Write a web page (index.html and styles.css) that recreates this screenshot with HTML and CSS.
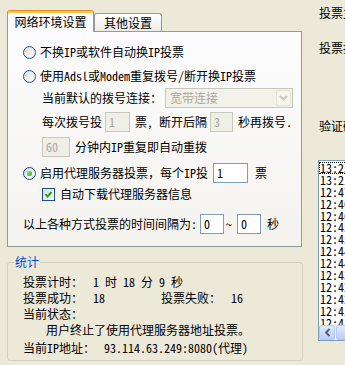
FILE: index.html
```html
<!DOCTYPE html>
<html lang="zh-CN">
<head>
    <meta charset="UTF-8">
    <title>投票设置</title>
    <link rel="stylesheet" href="styles.css">
</head>
<body>
    <div class="window">
        <div class="left">
            <div class="tabs">
                <div class="tab active">网络环境设置</div>
                <div class="tab">其他设置</div>
            </div>
            <div class="panel">
                <div class="row radio-row r1"><span class="radio"></span><span>不换IP或软件自动换IP投票</span></div>
                <div class="row radio-row r2"><span class="radio"></span><span>使用Adsl或Modem重复拨号/断开换IP投票</span></div>
                <div class="row indent r3">
                    <span>当前默认的拨号连接：</span>
                    <div class="combo off ml3">
                        <span class="combo-text">宽带连接</span>
                        <span class="combo-btn"><svg width="9" height="6" viewBox="0 0 9 6"><polyline points="1,1 4.5,4.5 8,1" fill="none" stroke="#C9C7BA" stroke-width="2"/></svg></span>
                    </div>
                </div>
                <div class="row indent r4">
                    <span>每次拨号投</span>
                    <span class="edit off w25 ml3">1</span>
                    <span class="ml5">票, 断开后隔</span>
                    <span class="edit off w23 ml3">3</span>
                    <span class="ml5">秒再拨号.</span>
                </div>
                <div class="row indent r5">
                    <span class="edit off w28">60</span>
                    <span class="ml5">分钟内IP重复即自动重拨</span>
                </div>
                <div class="row radio-row r6">
                    <span class="radio on"></span><span>启用代理服务器投票，每个IP投</span>
                    <span class="edit w35 ml5">1</span>
                    <span class="ml7">票</span>
                </div>
                <div class="row indent r7">
                    <span class="check"><svg width="11" height="11" viewBox="0 0 11 11"><polyline points="2.5,5 4.5,7.5 8.5,3" fill="none" stroke="#21A121" stroke-width="2"/></svg></span>
                    <span>自动下载代理服务器信息</span>
                </div>
                <div class="row radio-row r8">
                    <span>以上各种方式投票的时间间隔为:</span>
                    <span class="edit w24 ml3">0</span>
                    <span class="ml2">~</span>
                    <span class="edit w24 ml5">0</span>
                    <span class="ml6">秒</span>
                </div>
            </div>
            <fieldset class="group">
                <legend>统计</legend>
                <div class="stats">
                    <div class="srow"><span class="k">投票计时：</span><span>1 时 18 分 9 秒</span></div>
                    <div class="srow"><span class="k">投票成功：</span><span class="v">18</span><span class="k">投票失败：</span><span>16</span></div>
                    <div class="srow"><span>当前状态：</span></div>
                    <div class="srow sub"><span>用户终止了使用代理服务器地址投票。</span></div>
                    <div class="srow last"><span class="k wide">当前IP地址：</span><span>93.114.63.249:8080(代理)</span></div>
                </div>
            </fieldset>
        </div>
        <div class="right">
            <div class="rlabel l1">投票主题：</div>
            <div class="rlabel l2">投票按钮：</div>
            <div class="rlabel l3">验证码：</div>
            <div class="list">
                <div class="items">
                    <div class="item focus">13:25:41 投票成功</div>
                    <div class="item">13:21:08 投票成功</div>
                    <div class="item">12:47:33 投票成功</div>
                    <div class="item">12:46:59 投票成功</div>
                    <div class="item">12:46:21 投票失败</div>
                    <div class="item">12:45:50 投票成功</div>
                    <div class="item">12:45:12 投票成功</div>
                    <div class="item">12:44:40 投票失败</div>
                    <div class="item">12:44:02 投票成功</div>
                    <div class="item">12:43:31 投票成功</div>
                    <div class="item">12:42:57 投票失败</div>
                    <div class="item">12:42:19 投票成功</div>
                    <div class="item">12:41:46 投票成功</div>
                    <div class="item">12:41:10 投票成功</div>
                    <div class="item">12:40:38 投票成功</div>
                </div>
                <div class="hscroll">
                    <span class="sb-btn"><svg width="7" height="9" viewBox="0 0 7 9"><polyline points="5.5,1 2,4.5 5.5,8" fill="none" stroke="#4D6185" stroke-width="2"/></svg></span>
                    <span class="sb-thumb"></span>
                </div>
            </div>
        </div>
    </div>
</body>
</html>
```

FILE: styles.css
```css
body {
    margin: 0;
    height: 365px;
    overflow: hidden;
    background: #ECE9D8;
    font-family: "Noto Sans Mono CJK SC", "Noto Sans CJK SC", sans-serif;
    font-size: 12px;
    line-height: 14px;
    color: #000;
}
.window {
    display: flex;
}
.left {
    width: 305px;
    flex: none;
    padding-left: 7px;
    box-sizing: border-box;
}
.tabs {
    display: flex;
    align-items: flex-end;
    margin-top: 10px;
    height: 21px;
}
.tab {
    width: 68px;
    height: 18px;
    box-sizing: border-box;
    border: 1px solid #919B9C;
    border-bottom: none;
    border-radius: 3px 3px 0 0;
    background: linear-gradient(#FFFFFF, #ECEBE6);
    display: flex;
    align-items: center;
    justify-content: center;
    white-space: nowrap;
}
.tab.active {
    width: 87px;
    height: 22px;
    margin-bottom: -1px;
    position: relative;
    z-index: 1;
    background: #FCFCFE;
    border-top: 1px solid #E68B2C;
    box-shadow: inset 0 2px #FFC73C;
    padding-top: 1px;
}
.panel {
    width: 295px;
    height: 216px;
    box-sizing: border-box;
    border: 1px solid #919B9C;
    background: linear-gradient(#FCFCFE, #F4F3EE);
    padding-top: 10px;
}
.row {
    display: flex;
    align-items: center;
    height: 20px;
    white-space: nowrap;
}
.radio-row { padding-left: 15px; }
.indent { padding-left: 34px; }
.r2 { margin-top: 4px; }
.r3 { margin-top: 2px; }
.r4 { margin-top: 4px; }
.r5 { margin-top: 5px; }
.r6 { margin-top: 6px; }
.r7 { margin-top: 1px; }
.r8 { margin-top: 10px; }
.ml2 { margin-left: 2px; }
.ml3 { margin-left: 3px; }
.ml5 { margin-left: 5px; }
.ml6 { margin-left: 6px; }
.ml7 { margin-left: 7px; }
.radio {
    width: 13px;
    height: 13px;
    box-sizing: border-box;
    border: 1px solid #1C5180;
    border-radius: 50%;
    background: linear-gradient(135deg, #DCDCD7, #FFFFFF);
    margin-right: 4px;
    display: flex;
    align-items: center;
    justify-content: center;
    flex: none;
}
.radio.on::after {
    content: "";
    width: 5px;
    height: 5px;
    border-radius: 50%;
    background: radial-gradient(circle at 35% 35%, #7CE57A, #21A121);
}
.check {
    width: 13px;
    height: 13px;
    box-sizing: border-box;
    border: 1px solid #1C5180;
    background: linear-gradient(135deg, #DCDCD7, #FFFFFF);
    margin-right: 5px;
    display: flex;
    flex: none;
}
.combo {
    width: 128px;
    height: 20px;
    box-sizing: border-box;
    border: 1px solid #C9C7BA;
    background: #F2F1EA;
    display: flex;
    align-items: center;
    padding: 1px;
}
.combo-text {
    flex: 1;
    padding-left: 3px;
    color: #ACA899;
}
.combo-btn {
    width: 15px;
    height: 16px;
    box-sizing: border-box;
    border: 1px solid #E3E1D8;
    border-radius: 2px;
    background: #F6F5F0;
    display: flex;
    align-items: center;
    justify-content: center;
}
.edit {
    height: 20px;
    box-sizing: border-box;
    border: 1px solid #7F9DB9;
    background: #fff;
    padding-left: 3px;
    display: flex;
    align-items: center;
    flex: none;
}
.edit.off {
    border-color: #C9C7BA;
    background: #EFEEE7;
    color: #ACA899;
}
.w23 { width: 23px; }
.w24 { width: 24px; }
.w25 { width: 25px; }
.w28 { width: 28px; }
.w35 { width: 35px; }
.group {
    margin: 8px 0 0;
    padding: 0;
    width: 296px;
    height: 106px;
    box-sizing: border-box;
    border: 1px solid #D0D0BF;
    border-radius: 3px;
    min-inline-size: 0;
}
.group legend {
    margin-left: 6px;
    padding: 0 1px;
    color: #0046D5;
    line-height: 14px;
}
.stats {
    padding: 5px 0 0 15px;
}
.srow {
    display: flex;
    align-items: center;
    height: 16px;
    white-space: nowrap;
}
.srow.sub { padding-left: 23px; }
.srow.last { margin-top: 2px; }
.k { width: 70px; flex: none; }
.k.wide { width: 81px; }
.v { width: 68px; flex: none; }
.right {
    flex: 1;
    min-width: 0;
    padding-left: 14px;
}
.rlabel {
    white-space: nowrap;
}
.l1 { margin-top: 6px; }
.l2 { margin-top: 21px; }
.l3 { margin-top: 64px; }
.list {
    margin: 27px 0 0 -1px;
    width: 100px;
    height: 181px;
    box-sizing: border-box;
    border: 1px solid #7F9DB9;
    background: #fff;
    display: flex;
    flex-direction: column;
}
.items {
    flex: 1;
    overflow: hidden;
    padding-top: 1px;
}
.item {
    height: 11.9px;
    line-height: 11.9px;
    padding-left: 1px;
    white-space: nowrap;
}
.item.focus {
    outline: 1px dotted #000;
    outline-offset: -1px;
}
.hscroll {
    height: 15px;
    flex: none;
    display: flex;
    background: #F7F6F1;
}
.sb-btn, .sb-thumb {
    box-sizing: border-box;
    border: 1px solid #B4C8F6;
    border-radius: 2px;
    background: linear-gradient(#E1EAFE, #BBCEF8);
}
.sb-btn {
    width: 16px;
    display: flex;
    align-items: center;
    justify-content: center;
}
.sb-thumb {
    width: 60px;
    margin-left: 1px;
}
```
